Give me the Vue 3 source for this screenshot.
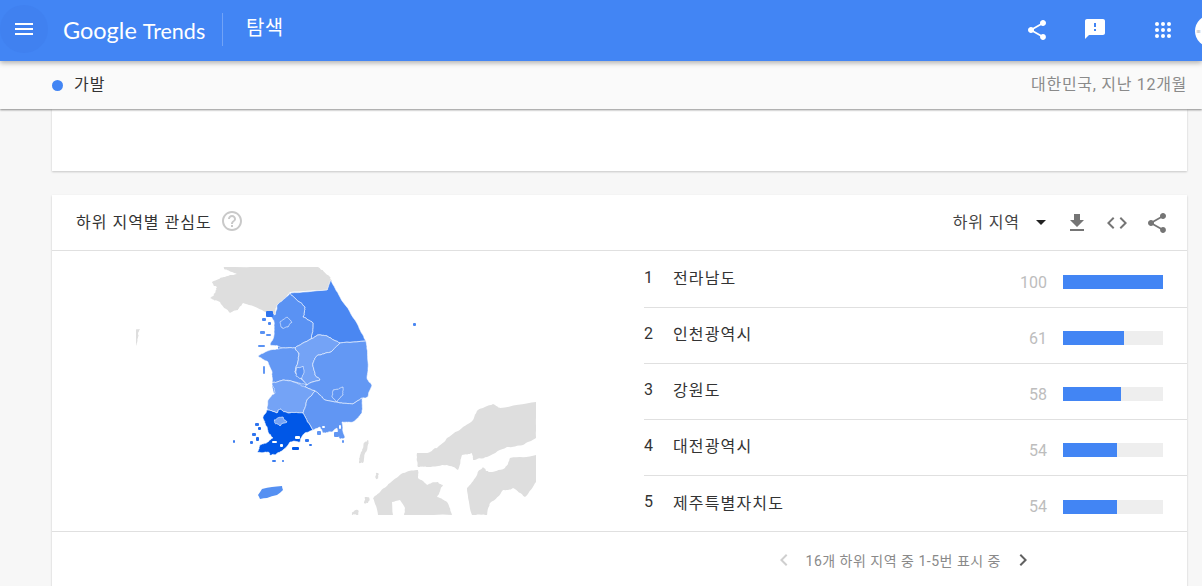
<script setup>
const rows = [
  { n: 1, name: '전라남도', v: 100 },
  { n: 2, name: '인천광역시', v: 61 },
  { n: 3, name: '강원도', v: 58 },
  { n: 4, name: '대전광역시', v: 54 },
  { n: 5, name: '제주특별자치도', v: 54 },
]

const hash = (x, y) => {
  const s = Math.sin(x * 12.9898 + y * 78.233) * 43758.5453
  return s - Math.floor(s) - 0.5
}
function rough(pts, depth = 3, amp = 2.2) {
  let cur = pts
  for (let d = 0; d < depth; d++) {
    const next = []
    cur.forEach((p, i) => {
      const q = cur[(i + 1) % cur.length]
      const mx = (p[0] + q[0]) / 2
      const my = (p[1] + q[1]) / 2
      const k = amp / (d + 1)
      next.push(p, [mx + hash(mx, my) * k, my + hash(my, mx) * k])
    })
    cur = next
  }
  return 'M' + cur.map((p) => p[0].toFixed(1) + ' ' + p[1].toFixed(1)).join('L') + 'Z'
}

const gray = [
  [[223,267],[318,267],[330,277],[332,280],[327,290],[290,292],[277,305],[274,315],[262,310],[243,303],[238,310],[230,313],[220,302],[210,298],[215,293],[217,287],[212,282],[225,277],[237,274],[227,270]],
  [[365,442],[368,440],[367,450],[363,463],[359,463],[360,455],[363,448]],
  [[536,402],[500,408],[493,404],[478,410],[473,420],[462,428],[447,438],[437,448],[430,452],[417,453],[418,467],[428,467],[447,465],[458,470],[462,455],[472,453],[473,460],[487,457],[507,447],[523,445],[536,438]],
  [[536,455],[510,458],[505,468],[490,472],[483,467],[477,475],[467,488],[472,515],[487,515],[490,503],[503,490],[513,488],[525,497],[536,482]],
  [[418,470],[403,473],[390,483],[380,492],[373,498],[378,515],[452,515],[447,502],[437,497],[443,485],[438,482],[427,485],[418,478]],
  [[135,330],[140,329],[138,338],[135,347]],
  [[376,474],[378,473],[378,478],[376,479]],
  [[365,497],[369,497],[368,503],[364,503]],
  [[352,512],[358,510],[358,515],[352,515]],
]
const cuts = [
  [[392,502],[400,500],[405,508],[404,515],[393,515]],
  [[525,497],[530,497],[528,500]],
]
const under = [[290,295],[340,300],[362,340],[366,395],[340,420],[280,420],[272,385],[278,350],[278,320]]
const regions = [
  { f: '#4a87f2', p: [[290,293],[327,290],[331,280],[340,297],[355,320],[364,337],[366,341],[340,343],[327,336],[318,335],[311,339],[313,323],[303,317],[305,307],[295,298]] },
  { f: '#5a92f3', p: [[290,293],[277,305],[275,315],[268,312],[274,322],[274,335],[270,345],[282,348],[295,348],[311,339],[313,323],[303,317],[305,307],[295,298]] },
  { f: '#6398f4', p: [[282,348],[295,348],[299,353],[295,372],[303,380],[307,385],[295,382],[283,380],[272,383],[272,372],[268,362],[258,356],[270,350]] },
  { f: '#74a3f6', p: [[311,339],[318,335],[327,336],[340,343],[331,352],[318,355],[313,363],[315,375],[320,380],[307,385],[303,380],[295,372],[299,353],[295,348]] },
  { f: '#6398f4', p: [[340,343],[366,341],[368,362],[367,378],[372,385],[368,397],[362,398],[353,404],[340,403],[325,400],[315,391],[305,387],[307,385],[320,380],[315,375],[313,363],[318,355],[331,352]] },
  { f: '#74a3f6', p: [[272,383],[283,380],[297,383],[305,387],[315,391],[307,400],[303,413],[288,413],[280,409],[277,413],[267,410],[268,400],[275,393]] },
  { f: '#6196f3', p: [[303,413],[307,400],[315,391],[325,400],[340,403],[353,404],[362,398],[362,413],[353,422],[342,422],[345,438],[340,439],[337,428],[332,432],[323,433],[320,427],[313,430]] },
  { f: '#0057e7', p: [[263,417],[267,410],[277,413],[280,409],[288,413],[303,413],[313,430],[305,433],[300,442],[290,442],[283,450],[275,455],[270,455],[268,452],[257,452],[260,445],[268,442],[273,438],[268,432],[265,423]] },
  { f: '#74a3f6', p: [[274,420],[283,417],[287,422],[280,426],[275,423]] },
  { f: '#6196f3', p: [[333,390],[343,387],[343,395],[337,402],[332,397]] },
  { f: '#5a92f3', p: [[280,322],[287,317],[292,322],[288,327],[282,328]] },
  { f: '#5a92f3', p: [[296,368],[303,366],[304,373],[302,379],[296,376]] },
]
const specks = [
  [266,311,7,6,'#2f74ee'],[262,318,4,3,'#4a87f2'],[268,322,3,3,'#4a87f2'],[260,331,5,3,'#5a92f3'],[266,334,5,2,'#5a92f3'],[258,345,7,2,'#5a92f3'],[263,366,2,8,'#6398f4'],
  [255,423,4,3,'#2f74ee'],[258,427,3,3,'#1a66ea'],[252,433,4,3,'#2f74ee'],[250,441,3,3,'#2f74ee'],[256,437,3,4,'#1a66ea'],
  [272,460,4,2,'#3b7df0'],[282,460,2,2,'#2f74ee'],[233,440,2,3,'#3b7df0'],[292,447,7,3,'#0057e7'],[305,439,4,3,'#2f74ee'],
  [309,444,3,2,'#2f74ee'],[317,431,4,4,'#6196f3'],[334,432,5,5,'#6196f3'],[342,440,2,3,'#6196f3'],[413,323,3,3,'#4a87f2'],
  [272,441,5,2,'#ffffff'],[280,444,3,3,'#ffffff'],[295,436,5,3,'#ffffff'],[263,432,3,2,'#ffffff'],[322,426,3,2,'#ffffff'],[339,425,2,4,'#ffffff'],
]
const jeju = rough([[258,495],[262,489],[272,487],[282,486],[283,490],[277,495],[267,498],[260,499]], 1, 0.6)
const grayPaths = gray.map((p) => rough(p))
const cutPaths = cuts.map((p) => rough(p, 2, 1))
const underPath = rough(under, 1, 0.5)
const regionPaths = regions.map((r) => ({ f: r.f, d: rough(r.p, 3, 1.8) }))
const dots = []
for (const y of [6, 12, 18]) for (const x of [6, 12, 18]) dots.push({ x, y })
</script>

<template>
  <div class="page">
    <header class="topbar">
      <div class="menu-btn">
        <svg viewBox="0 0 24 24" class="icon white"><path d="M3 18h18v-2H3v2zm0-5h18v-2H3v2zm0-7v2h18V6H3z" /></svg>
      </div>
      <div class="logo"><span class="logo-a">Google</span><span class="logo-b">Trends</span></div>
      <div class="divider"></div>
      <div class="section">탐색</div>
      <div class="spacer"></div>
      <svg viewBox="0 0 24 24" class="icon white share-top"><path d="M18 16.08c-.76 0-1.44.3-1.96.77L8.91 12.7c.05-.23.09-.46.09-.7s-.04-.47-.09-.7l7.05-4.11c.54.5 1.25.81 2.04.81 1.66 0 3-1.34 3-3s-1.34-3-3-3-3 1.34-3 3c0 .24.04.47.09.7L8.04 9.81C7.5 9.31 6.79 9 6 9c-1.66 0-3 1.34-3 3s1.34 3 3 3c.79 0 1.5-.31 2.04-.81l7.12 4.16c-.05.21-.08.43-.08.65 0 1.61 1.31 2.92 2.92 2.92 1.61 0 2.92-1.31 2.92-2.92s-1.31-2.92-2.92-2.92z" /></svg>
      <svg viewBox="0 0 24 24" class="icon white feedback"><path d="M20 2H4c-1.1 0-1.99.9-1.99 2L2 22l4-4h14c1.1 0 2-.9 2-2V4c0-1.1-.9-2-2-2zm-7 12h-2v-2h2v2zm0-4h-2V6h2v4z" /></svg>
      <svg viewBox="0 0 24 24" class="icon white apps"><circle v-for="d in dots" :key="d.x + '-' + d.y" :cx="d.x" :cy="d.y" r="2" /></svg>
      <div class="avatar"><span>≡</span></div>
    </header>

    <div class="subbar">
      <span class="dot"></span>
      <span class="term">가발</span>
      <span class="spacer"></span>
      <span class="scope">대한민국, 지난 12개월</span>
    </div>

    <main class="content">
      <section class="card first"></section>
      <section class="card second">
        <div class="card-head">
          <span class="title">하위 지역별 관심도</span>
          <svg viewBox="0 0 24 24" class="icon help"><path d="M11 18h2v-2h-2v2zm1-16C6.48 2 2 6.48 2 12s4.48 10 10 10 10-4.48 10-10S17.52 2 12 2zm0 18c-4.41 0-8-3.59-8-8s3.59-8 8-8 8 3.59 8 8-3.59 8-8 8zm0-14c-2.21 0-4 1.79-4 4h2c0-1.1.9-2 2-2s2 .9 2 2c0 2-3 1.75-3 5h2c0-2.25 3-2.5 3-5 0-2.21-1.79-4-4-4z" /></svg>
          <span class="spacer"></span>
          <span class="picker">하위 지역</span>
          <span class="caret"></span>
          <svg viewBox="0 0 24 24" class="icon tool dl"><path d="M19 9h-4V3H9v6H5l7 7 7-7zM5 18v2h14v-2H5z" /></svg>
          <svg viewBox="0 0 24 24" class="icon tool code"><path d="M9.4 16.6L4.8 12l4.6-4.6L8 6l-6 6 6 6 1.4-1.4zm5.2 0l4.6-4.6-4.6-4.6L16 6l6 6-6 6-1.4-1.4z" /></svg>
          <svg viewBox="0 0 24 24" class="icon tool shr"><path d="M18 16.08c-.76 0-1.44.3-1.96.77L8.91 12.7c.05-.23.09-.46.09-.7s-.04-.47-.09-.7l7.05-4.11c.54.5 1.25.81 2.04.81 1.66 0 3-1.34 3-3s-1.34-3-3-3-3 1.34-3 3c0 .24.04.47.09.7L8.04 9.81C7.5 9.31 6.79 9 6 9c-1.66 0-3 1.34-3 3s1.34 3 3 3c.79 0 1.5-.31 2.04-.81l7.12 4.16c-.05.21-.08.43-.08.65 0 1.61 1.31 2.92 2.92 2.92 1.61 0 2.92-1.31 2.92-2.92s-1.31-2.92-2.92-2.92z" /></svg>
        </div>

        <div class="card-body">
          <div class="map-col">
            <svg class="map" viewBox="136 267 400 248" width="400" height="248">
              <path v-for="(d, i) in grayPaths" :key="'g' + i" :d="d" fill="#dedede" />
              <path v-for="(d, i) in cutPaths" :key="'c' + i" :d="d" fill="#ffffff" />
              <path :d="underPath" fill="#6398f4" />
              <path v-for="(r, i) in regionPaths" :key="'r' + i" :d="r.d" :fill="r.f" stroke="#ffffff" stroke-opacity="0.65" stroke-width="0.9" />
              <rect v-for="(s, i) in specks" :key="'s' + i" :x="s[0]" :y="s[1]" :width="s[2]" :height="s[3]" :fill="s[4]" rx="1" />
              <path :d="jeju" fill="#5590f2" />
            </svg>
          </div>
          <ul class="list">
            <li v-for="r in rows" :key="r.n" class="row">
              <span class="rank">{{ r.n }}</span>
              <span class="name">{{ r.name }}</span>
              <span class="val">{{ r.v }}</span>
              <span class="track"><span class="fill" :style="{ width: r.v + '%' }"></span></span>
            </li>
          </ul>
        </div>

        <div class="pager">
          <svg viewBox="0 0 24 24" class="icon chev off"><path d="M15.41 7.41L14 6l-6 6 6 6 1.41-1.41L10.83 12z" /></svg>
          <span class="pager-text">16개 하위 지역 중 1-5번 표시 중</span>
          <svg viewBox="0 0 24 24" class="icon chev on"><path d="M10 6L8.59 7.41 13.17 12l-4.58 4.59L10 18l6-6z" /></svg>
        </div>
      </section>
    </main>
  </div>
</template>

<style>
html, body { margin: 0; overflow: hidden; background: #f7f7f7; }
</style>

<style scoped>
.page {
  width: 1202px;
  height: 586px;
  overflow: hidden;
  background: #f7f7f7;
  font-family: Roboto, "Noto Sans CJK KR", sans-serif;
  color: #333;
}
.spacer { flex: 1; }
.icon { display: block; flex: none; width: 24px; height: 24px; }
.white { fill: #fff; }

.topbar {
  position: relative;
  z-index: 2;
  height: 61px;
  background: #4285f4;
  display: flex;
  align-items: center;
  box-shadow: 0 2px 5px rgba(0, 0, 0, 0.3);
  overflow: hidden;
}
.menu-btn {
  width: 48px;
  height: 48px;
  border-radius: 50%;
  background: #4081f0;
  display: flex;
  align-items: center;
  justify-content: center;
  margin-top: -3px;
  flex: none;
}
.logo {
  margin-left: 15px;
  width: 159px;
  font-family: Lato, sans-serif;
  color: #fff;
  white-space: nowrap;
  margin-top: -2px;
  display: flex;
  align-items: baseline;
}
.logo-a { font-size: 23.5px; }
.logo-b { font-size: 21.5px; font-weight: 400; margin-left: 6px; }
.divider { width: 1px; height: 33px; background: rgba(255, 255, 255, 0.25); margin-top: -3px; flex: none; }
.section {
  margin-left: 23px;
  font-size: 20px;
  letter-spacing: 0.4px;
  color: #fff;
  margin-top: -8px;
}
.share-top { margin-right: 34px; margin-top: -2px; }
.feedback { margin-right: 44px; margin-top: -4px; }
.apps { margin-right: 20px; margin-top: -2px; }
.avatar {
  width: 31px;
  height: 32px;
  margin-right: -25px;
  border-radius: 50%;
  background: #fff;
  flex: none;
  font-size: 5px;
  color: #666;
  line-height: 32px;
  padding-left: 1px;
}
.avatar span { display: block; }

.subbar {
  position: relative;
  z-index: 1;
  height: 48px;
  background: #fafafa;
  display: flex;
  align-items: center;
  padding: 0 15px 0 52px;
  box-shadow: 0 1px 2px rgba(0, 0, 0, 0.45);
}
.dot { width: 11px; height: 11px; border-radius: 50%; background: #4285f4; margin-right: 11px; }
.term { font-size: 16px; color: #333; margin-top: -5px; letter-spacing: 1px; }
.scope { font-size: 16px; color: #8a8a8a; margin-top: -5px; letter-spacing: 0.7px; }

.content { padding: 0 15px 0 52px; }
.card { background: #fff; box-shadow: 0 1px 2px rgba(0, 0, 0, 0.2); }
.first { height: 62px; margin-bottom: 24px; }
.second { height: 420px; }

.card-head {
  height: 55px;
  display: flex;
  align-items: center;
  padding: 0 18px 0 24px;
  border-bottom: 1px solid #e0e0e0;
}
.title { font-size: 16px; color: #333; margin-top: -3px; letter-spacing: 1px; }
.help { fill: #c9c9c9; margin-left: 8px; margin-top: -3px; }
.picker { font-size: 16px; color: #444; margin-top: -3px; letter-spacing: 0.9px; }
.caret {
  width: 0;
  height: 0;
  margin-left: 16px;
  border-left: 5.5px solid transparent;
  border-right: 5.5px solid transparent;
  border-top: 5.5px solid #222;
  margin-right: 19px;
}
.tool { fill: #757575; }
.dl, .code { margin-right: 16px; }

.card-body { display: flex; height: 280px; border-bottom: 1px solid #e0e0e0; }
.map-col { width: 592px; flex: none; padding: 16px 0 0 84px; box-sizing: border-box; }
.map { display: block; }
.list { flex: 1; list-style: none; margin: 0; padding: 1px 0 0; }
.row {
  height: 56px;
  box-sizing: border-box;
  border-bottom: 1px solid #e0e0e0;
  display: flex;
  align-items: center;
  padding-right: 24px;
}
.row:last-child { border-bottom: 0; }
.rank { width: 29px; font-size: 16px; margin-top: -5px; color: #333; }
.name { flex: 1; font-size: 16px; margin-top: -5px; color: #333; letter-spacing: 1.15px; }
.val { width: 40px; text-align: right; font-size: 16px; color: #bdbdbd; margin-top: 5px; margin-right: 16px; }
.track { width: 100px; height: 14px; background: #eeeeee; display: block; margin-top: 5px; }
.fill { display: block; height: 100%; background: #4285f4; }

.pager {
  height: 56px;
  display: flex;
  align-items: center;
  justify-content: flex-end;
  padding-right: 152px;
}
.pager-text { font-size: 14px; color: #8a8a8a; margin: 0 10px 0 10px; letter-spacing: 0.5px; }
.chev { width: 24px; height: 24px; }
.off { fill: #cfcfcf; }
.on { fill: #616161; }
</style>
